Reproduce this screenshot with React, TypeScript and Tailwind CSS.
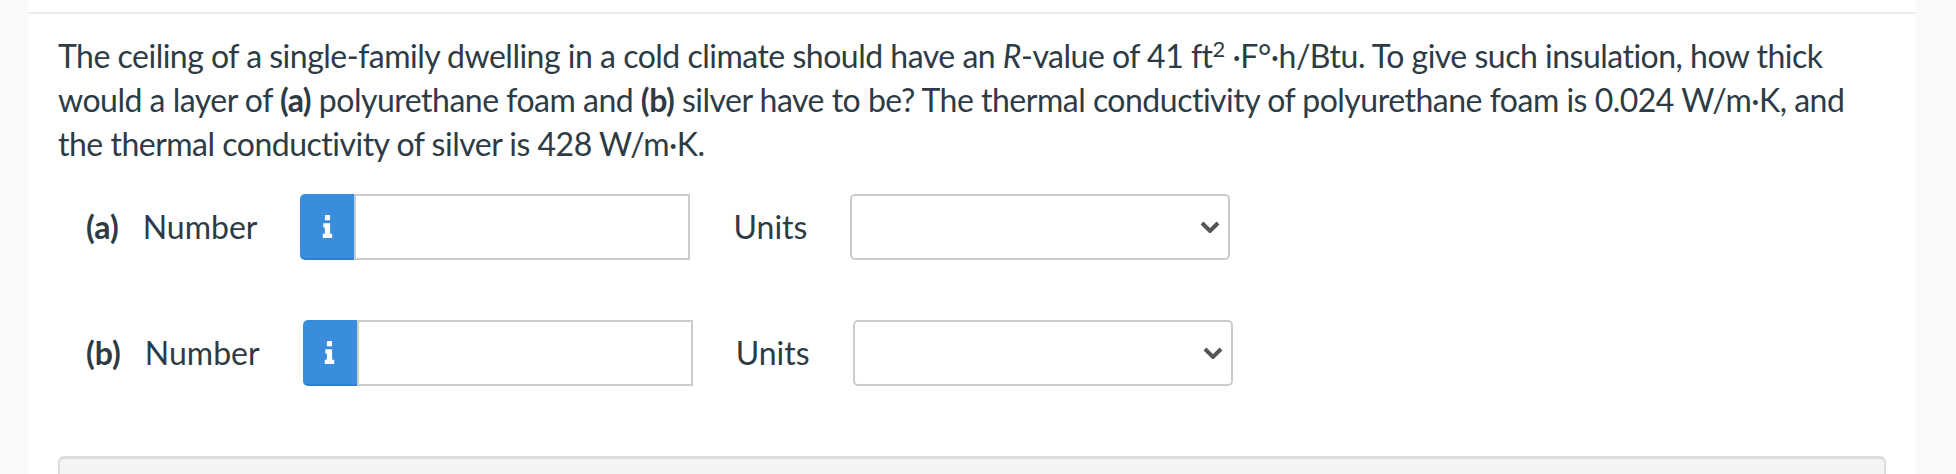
import React from 'react';

function InfoGlyph() {
  return (
    <svg width="11" height="23" viewBox="0 0 10 22" fill="#ffffff" aria-hidden="true">
      <rect x="2.5" y="0" width="5" height="5" rx="0.8" />
      <path d="M1 8h6.5v10H9.5v4H0.5v-4h2v-6H1z" />
    </svg>
  );
}

function Chevron() {
  return (
    <svg width="20" height="12" viewBox="0 0 20 12" aria-hidden="true">
      <polyline points="2,2 10,10 18,2" fill="none" stroke="#555555" strokeWidth="4" strokeLinejoin="miter" />
    </svg>
  );
}

function AnswerRow({ part }: { part: string }) {
  return (
    <div className="flex items-center pl-[28px]">
      <span className="font-bold">({part})</span>
      <span className="ml-[24px]">Number</span>
      <div className="ml-[43px] flex h-[66px]">
        <button className="flex w-[54px] items-center justify-center rounded-l-[5px] border-b-2 border-[#2f7fcf] bg-[#3a8ddd]">
          <InfoGlyph />
        </button>
        <input className="h-full w-[336px] border-2 border-[#cccccc] bg-white outline-none" />
      </div>
      <span className="ml-[43px]">Units</span>
      <div className="ml-[43px] flex h-[66px] w-[380px] items-center justify-end rounded-[5px] border-2 border-[#cbcbcb] bg-white pr-[8px]">
        <Chevron />
      </div>
    </div>
  );
}

export default function App() {
  return (
    <div className="flex min-h-[474px] bg-[#fafafa] text-[#2d3b45]" style={{ fontFamily: 'Lato, "Liberation Sans", sans-serif' }}>
      <div className="ml-[28px] w-[1888px] overflow-hidden bg-white pt-[12px]">
        <div className="border-t-2 border-[#ececec] pl-[30px] pr-[30px] pt-[20px]">
          <p className="text-[32px] leading-[44px] tracking-[-0.5px]">
            The ceiling of a single-family dwelling in a cold climate should have an <i>R</i>-value of 41 ft
            <sup className="text-[22px]">2</sup> ·F°·h/Btu. To give such insulation, how thick would a layer of{' '}
            <b>(a)</b> polyurethane foam and <b>(b)</b> silver have to be? The thermal conductivity of polyurethane
            foam is 0.024 W/m·K, and the thermal conductivity of silver is 428 W/m·K.
          </p>
          <div className="mt-[28px] flex flex-col gap-[60px] text-[32px]">
            <AnswerRow part="a" />
            <AnswerRow part="b" />
          </div>
          <div className="mt-[70px] h-[40px] rounded-t-[6px] border-2 border-t-[3px] border-[#dcdcdc] bg-[#f4f4f4]" />
        </div>
      </div>
    </div>
  );
}
